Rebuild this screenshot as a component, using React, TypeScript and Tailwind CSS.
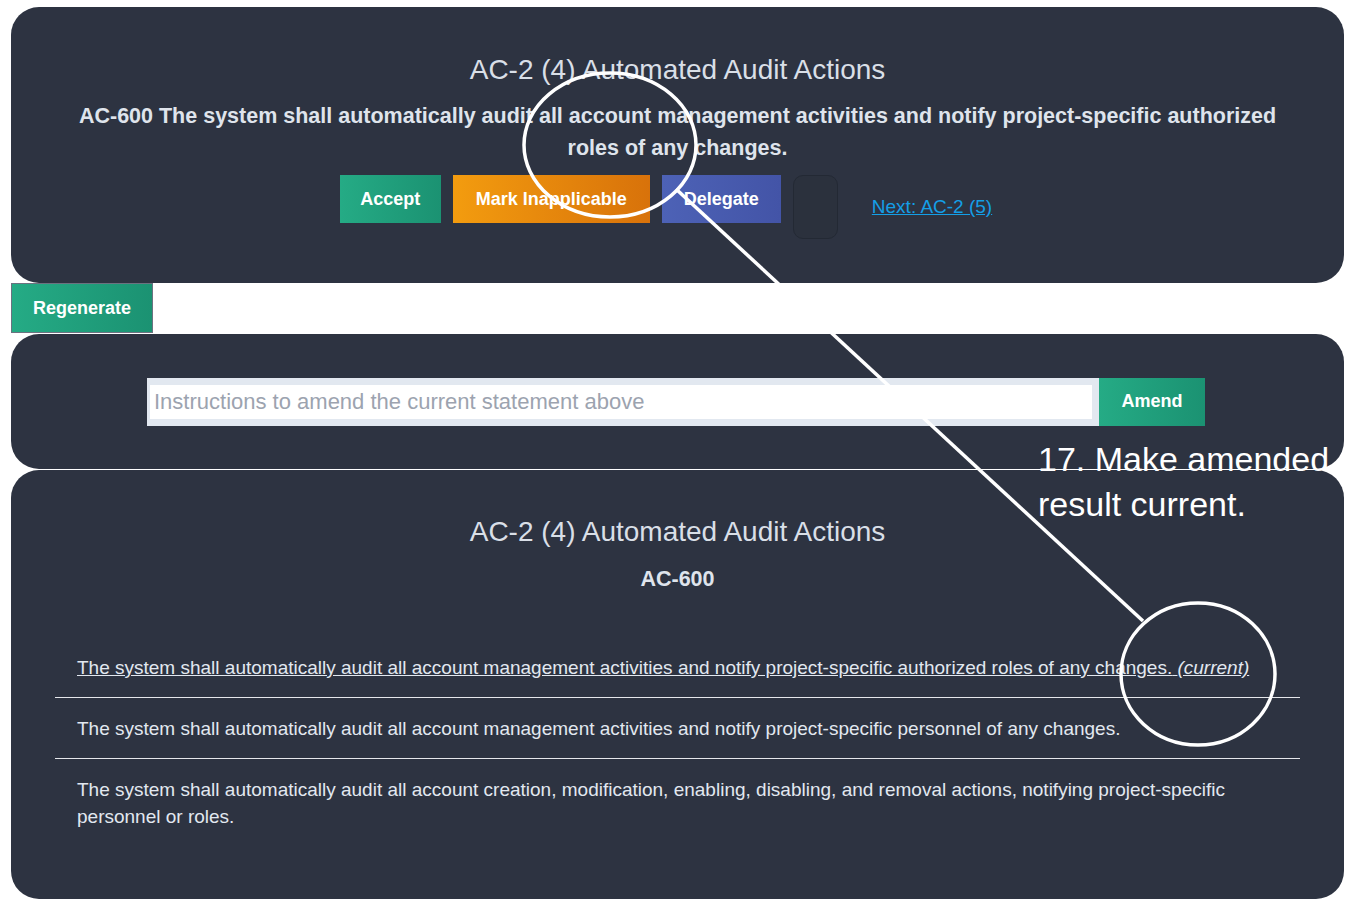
import React from 'react';

const statements = [
  {
    id: 1,
    text: 'The system shall automatically audit all account management activities and notify project-specific authorized roles of any changes.',
    current: true,
  },
  {
    id: 2,
    text: 'The system shall automatically audit all account management activities and notify project-specific personnel of any changes.',
    current: false,
  },
  {
    id: 3,
    text: 'The system shall automatically audit all account creation, modification, enabling, disabling, and removal actions, notifying project-specific personnel or roles.',
    current: false,
  },
];

const greenBtn = 'bg-gradient-to-r from-[#25ab85] to-[#1b9272] text-white';

const App = () => {
  return (
    <div
      className="relative min-h-screen bg-white px-[11px] pt-[7px] pb-[5px]"
      style={{ fontFamily: '"Liberation Sans", Arial, sans-serif' }}
    >
      {/* Current statement */}
      <section className="flex h-[276px] flex-col items-center rounded-[28px] bg-[#2d3341] px-16 pt-[45px] text-center">
        <h2 className="text-[28px] leading-9 text-[#d9dfe7]">AC-2 (4) Automated Audit Actions</h2>
        <p className="mt-3 text-[21.5px] font-bold leading-8 text-[#dfe4ec]">
          AC-600 The system shall automatically audit all account management activities and notify project-specific authorized roles of any changes.
        </p>
        <div className="mt-[11px] flex items-start justify-center gap-3 pr-[23px]">
          <button className={`h-12 w-[101px] text-[18px] font-bold ${greenBtn}`}>Accept</button>
          <button className="h-12 w-[197px] bg-gradient-to-r from-[#f39c0f] to-[#d8720a] text-[18px] font-bold text-white">
            Mark Inapplicable
          </button>
          <button className="h-12 w-[119px] bg-gradient-to-r from-[#4d62b6] to-[#4354a7] text-[18px] font-bold text-white">
            Delegate
          </button>
          <div className="h-16 w-[45px] rounded-[10px] border border-[#232934] bg-[#2b313d]" />
          <a href="#" className="ml-[22px] self-center text-[19px] text-[#149fe7] underline">
            Next: AC-2 (5)
          </a>
        </div>
      </section>

      <button className={`block h-[50px] w-[142px] border border-[#6b7280] text-[18px] font-bold ${greenBtn}`}>
        Regenerate
      </button>

      {/* Amend */}
      <section className="mt-px flex h-[135px] items-center justify-center rounded-[28px] bg-[#2d3341] pr-[3px]">
        <input
          placeholder="Instructions to amend the current statement above"
          className="h-12 w-[952px] border-y-[7px] border-r-[7px] border-l-[3px] border-[#e2e8f0] bg-white px-1 text-[22px] text-gray-700 outline-none placeholder:text-[#9ca3af]"
        />
        <button className={`h-12 w-[106px] text-[18px] font-bold ${greenBtn}`}>Amend</button>
      </section>

      {/* History */}
      <section className="mt-px h-[429px] rounded-[28px] bg-[#2d3341] px-11 pt-11">
        <h2 className="text-center text-[28px] leading-9 text-[#d9dfe7]">AC-2 (4) Automated Audit Actions</h2>
        <h3 className="mt-[15px] text-center text-[21.5px] font-bold leading-7 text-[#dfe4ec]">AC-600</h3>
        <ul className="mt-11">
          {statements.map((s, i) => (
            <li
              key={s.id}
              className={`px-[22px] pt-[17px] pb-4 text-[19px] leading-[27px] text-[#e2e8f0] ${
                i < statements.length - 1 ? 'border-b border-[#e5e7eb]' : ''
              }`}
            >
              {s.current ? (
                <span className="underline">
                  {s.text} <em>(current)</em>
                </span>
              ) : (
                s.text
              )}
            </li>
          ))}
        </ul>
      </section>

      {/* Tutorial callout */}
      <svg
        className="pointer-events-none absolute top-0 left-0"
        width="1355"
        height="904"
        viewBox="0 0 1355 904"
        fill="none"
      >
        <ellipse cx="610" cy="145" rx="86" ry="72" stroke="white" strokeWidth="3.5" />
        <ellipse cx="1198" cy="674" rx="77" ry="71" stroke="white" strokeWidth="3.5" />
        <line x1="676" y1="189" x2="1143" y2="621" stroke="white" strokeWidth="3.5" />
      </svg>
      <div className="pointer-events-none absolute top-[437px] left-[1038px] text-[34px] leading-[45px] text-white">
        17. Make amended
        <br />
        result current.
      </div>
    </div>
  );
};

export default App;
